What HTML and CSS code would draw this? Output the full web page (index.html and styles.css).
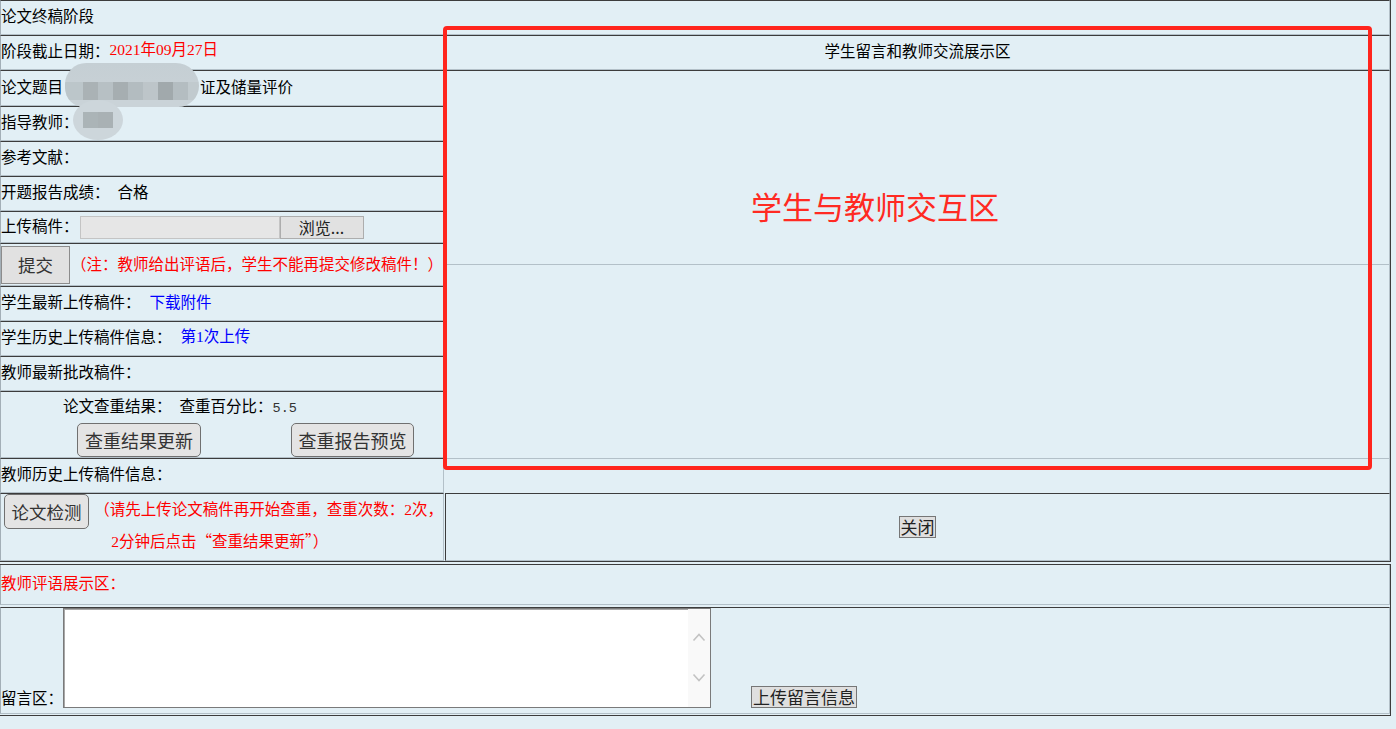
FILE: index.html
```html
<!DOCTYPE html>
<html lang="zh-CN">
<head>
<meta charset="utf-8">
<title>论文终稿阶段</title>
<link rel="stylesheet" href="styles.css">
</head>
<body>
<div class="page">
  <div class="panel">
    <div class="cell span txt">论文终稿阶段</div>

    <div class="cell lc txt">阶段截止日期：<span class="red dg">2021年09月27日</span></div>
    <div class="cell rc center txt">学生留言和教师交流展示区</div>

    <div class="cell lc txt">论文题目<span class="title-gap"></span>证及储量评价</div>
    <div class="cell rc big">
      <div class="area area-1"></div>
      <div class="area area-2"></div>
      <div class="area area-3"></div>
    </div>

    <div class="cell lc txt">指导教师：</div>
    <div class="cell lc txt">参考文献：</div>
    <div class="cell lc txt">开题报告成绩：<span class="val">合格</span></div>
    <div class="cell lc"><span class="lift">上传稿件：</span><span class="file-box"></span><button class="btn btn-browse">浏览...</button></div>
    <div class="cell lc"><button class="btn btn-submit">提交</button><span class="red note lift">（注：教师给出评语后，学生不能再提交修改稿件！）</span></div>
    <div class="cell lc txt">学生最新上传稿件：<a class="link">下载附件</a></div>
    <div class="cell lc txt">学生历史上传稿件信息：<a class="link">第<span class="dg">1</span>次上传</a></div>
    <div class="cell lc txt">教师最新批改稿件：</div>
    <div class="cell lc stack">
      <div class="check-line">论文查重结果：<span class="val2">查重百分比：</span><span class="num">5.5</span></div>
      <div class="check-btns">
        <button class="btn btn-round btn-update">查重结果更新</button>
        <button class="btn btn-round btn-report">查重报告预览</button>
      </div>
    </div>
    <div class="cell lc txt">教师历史上传稿件信息：</div>
    <div class="cell lc top">
      <button class="btn btn-round btn-detect">论文检测</button>
      <div class="red detect-note">
        <div class="line">（请先上传论文稿件再开始查重，查重次数：<span class="dg">2</span>次，</div>
        <div class="line line-2"><span class="dg">2</span>分钟后点击“查重结果更新”）</div>
      </div>
    </div>
    <div class="cell rc center"><button class="btn btn-small btn-close">关闭</button></div>
  </div>

  <div class="section">
    <div class="row comment-row"><span class="red">教师评语展示区：</span></div>
    <div class="row message-row">
      <span class="msg-label">留言区：</span>
      <div class="msg-box">
        <textarea class="msg-input"></textarea>
        <div class="msg-scroll">
          <svg width="14" height="10" viewBox="0 0 14 10"><polyline points="1.5,8.5 7,2.5 12.5,8.5" fill="none" stroke="#c3c3c3" stroke-width="1.6"/></svg>
          <svg width="14" height="10" viewBox="0 0 14 10"><polyline points="1.5,1.5 7,7.5 12.5,1.5" fill="none" stroke="#c3c3c3" stroke-width="1.6"/></svg>
        </div>
      </div>
      <button class="btn btn-small btn-upload">上传留言信息</button>
    </div>
  </div>

  <div class="blur blur-1">
    <span class="b b1"></span><span class="b b2"></span><span class="b b3"></span><span class="b b4"></span><span class="b b5"></span><span class="b b6"></span><span class="b b7"></span><span class="b b8"></span><span class="b b9"></span>
  </div>
  <div class="blur blur-2">
    <span class="c c1"></span><span class="c c2"></span>
  </div>

  <div class="annotation"></div>
  <div class="annotation-text">学生与教师交互区</div>
</div>
</body>
</html>
```

FILE: styles.css
```css
* { box-sizing: border-box; }
html, body { margin: 0; padding: 0; }
body {
  background: #e2eff5;
  font-family: "Noto Sans CJK SC", "Noto Sans", sans-serif;
  font-size: 15.5px;
  color: #000;
  width: 1396px;
  height: 729px;
  overflow: hidden;
}
.page { position: relative; width: 1396px; height: 729px; }

.panel {
  display: grid;
  width: 1391px;
  grid-template-columns: 444px 945px;
  column-gap: 1px;
  grid-template-rows: 35px 35px 36px 35px 35px 35px 32px 43px 35px 35px 35px 67px 35px 68px;
  border-right: 1px solid #3c3c3c;
  border-bottom: 1px solid #3c3c3c;
}
.cell {
  border-top: 1px solid #3c3c3c;
  border-bottom: 1px solid #b3c0c8;
  display: flex;
  align-items: center;
  white-space: nowrap;
  line-height: 20px;
  min-width: 0;
}
.txt { padding-bottom: 5px; }
.lift { padding-bottom: 4px; }
.span { grid-column: 1 / 3; border-left: 1px solid #a3afb7; border-right: 1px solid #b3c0c8; }
.lc { grid-column: 1; border-left: 1px solid #a3afb7; border-right: 1px solid #b3c0c8; }
.rc { grid-column: 2; border-left: 1px solid #3c3c3c; border-right: 1px solid #b3c0c8; }
.center { justify-content: center; }
.top { align-items: flex-start; }
.stack { flex-direction: column; align-items: stretch; }

.big {
  grid-row: 3 / 14;
  flex-direction: column;
  align-items: stretch;
  border-left: none;
  border-bottom: none;
}
.area-1, .area-2 { height: 194px; border-bottom: 1px solid #b3c0c8; flex: none; }
.area-3 { flex: 1; }

.red { color: #ff0000; }
.dg { font-family: "Liberation Serif", "Noto Sans CJK SC", serif; }
.link { color: #0000ff; margin-left: 9px; text-decoration: none; }
.val { margin-left: 8px; }
.title-gap { display: inline-block; width: 137px; }

.file-box {
  display: inline-block;
  width: 200px;
  height: 23px;
  margin-left: 1px;
  background: #e6e6e6;
  border: 1px solid #c4c4c4;
}

.btn {
  font-family: "Noto Sans CJK SC", "Noto Sans", sans-serif;
  margin: 0;
  padding: 0;
  background: #e1e1e1;
  border: 1px solid #8a8a8a;
  color: #222;
  white-space: nowrap;
}
.btn-browse {
  width: 84px;
  height: 23px;
  font-size: 16px;
  line-height: 21px;
  border-color: #adadad;
}
.btn-submit {
  width: 71px;
  height: 38px;
  font-size: 17.5px;
  border-color: #8c8c8c;
  color: #333;
}
.note { margin-left: 1px; }

.check-line {
  height: 31px;
  line-height: 27px;
  padding-left: 62px;
}
.val2 { margin-left: 8px; }
.num { font-family: "Liberation Mono", monospace; font-size: 13.5px; color: #333; }
.check-btns { display: flex; padding-left: 76px; gap: 90px; }
.btn-round {
  border-radius: 5px;
  border-color: #707070;
  background: #e4e4e4;
  color: #333;
  font-size: 18px;
}
.btn-update { width: 124px; height: 34px; }
.btn-report { width: 123px; height: 34px; }

.btn-detect {
  width: 87px;
  height: 35px;
  font-size: 17.5px;
  margin: 0 0 0 3px;
}
.detect-note { margin-left: 5px; margin-top: -2px; }
.detect-note .line { height: 32px; line-height: 32px; }
.detect-note .line-2 { padding-left: 17px; }

.btn-small {
  height: 22px;
  font-size: 17px;
  line-height: 20px;
  border-color: #767676;
  background: #dfdfdf;
  color: #222;
}
.btn-close { width: 37px; }
.btn-upload { width: 106px; margin-left: 40px; margin-bottom: 5px; }

.section {
  width: 1391px;
  margin-top: 2px;
  border-top: 1px solid #3c3c3c;
  border-right: 1px solid #3c3c3c;
  border-bottom: 1px solid #3c3c3c;
  padding-bottom: 1px;
}
.row {
  border-left: 1px solid #a3afb7;
  border-right: 1px solid #b3c0c8;
  border-bottom: 1px solid #b3c0c8;
  display: flex;
  white-space: nowrap;
}
.comment-row { height: 40px; align-items: center; padding-bottom: 5px; }
.message-row {
  margin-top: 2px;
  height: 107px;
  border-top: 1px solid #3c3c3c;
  align-items: flex-end;
}
.msg-label { width: 62px; line-height: 22px; margin-bottom: 5px; flex: none; }
.msg-box {
  align-self: flex-start;
  position: relative;
  width: 648px;
  height: 100px;
  background: #fff;
  border: 1px solid #7a7a7a;
  box-shadow: inset 1px 1px 0 #a8a8a8;
  display: flex;
  flex: none;
}
.msg-input {
  flex: 1;
  border: none;
  outline: none;
  resize: none;
  background: transparent;
  margin: 0;
}
.msg-scroll {
  width: 22px;
  background: #f9f9f9;
  display: flex;
  flex-direction: column;
  align-items: center;
  padding-top: 23px;
  gap: 31px;
}

.blur { position: absolute; overflow: hidden; filter: blur(0.7px); }
.blur-1 {
  left: 65px;
  top: 63px;
  width: 134px;
  height: 44px;
  border-radius: 22px 24px 22px 20px;
  background: linear-gradient(#c5cfd4 0, #c7d0d5 19px, transparent 19px, transparent 37px, #cad3d8 37px);
  display: flex;
  padding-top: 19px;
}
.b { display: block; height: 18px; flex: none; width: 15px; }
.b1 { width: 18px; background: #bcc6ca; }
.b2 { background: #aab2b5; }
.b3 { background: #b7c0c4; }
.b4 { background: #a6aeb1; }
.b5 { background: #b3bcc0; }
.b6 { background: #bdc5c9; }
.b7 { background: #a1a9ac; }
.b8 { background: #b4bdc1; }
.b9 { width: 12px; background: #c1cace; }

.blur-2 {
  left: 73px;
  top: 100px;
  width: 50px;
  height: 40px;
  border-radius: 50%;
  background: #cdd6db;
  display: flex;
  padding: 12px 0 0 10px;
}
.c { display: block; width: 15px; height: 16px; }
.c1 { background: #abb4b7; }
.c2 { background: #a9b1b4; }

.annotation {
  position: absolute;
  left: 443px;
  top: 26px;
  width: 929px;
  height: 444px;
  border: 4px solid #ff251d;
  border-radius: 4px;
}
.annotation-text {
  position: absolute;
  left: 751px;
  top: 186px;
  font-size: 31px;
  line-height: 40px;
  color: #ff2a22;
  white-space: nowrap;
}
```
